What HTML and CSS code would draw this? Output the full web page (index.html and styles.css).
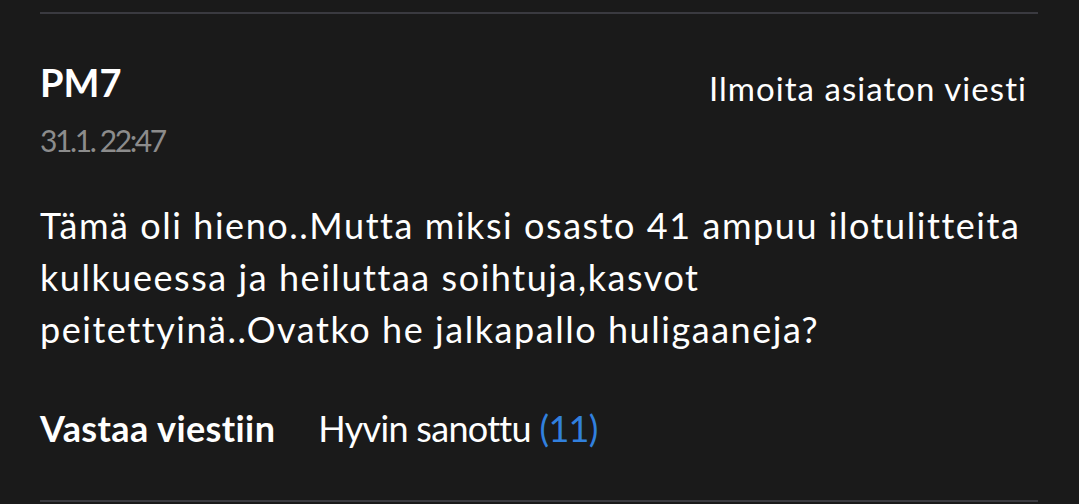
FILE: index.html
```html
<!DOCTYPE html>
<html lang="fi">
  <head>
    <meta charset="UTF-8" />
    <meta name="viewport" content="width=device-width, initial-scale=1.0" />
    <title>Kommentti</title>
    <link rel="stylesheet" href="styles.css">
  </head>
  <body>
    <div class="comment">
      <div class="comment-head">
        <div class="author">
          <h3 class="name">PM7</h3>
          <span class="time">31.1. 22:47</span>
        </div>
        <a class="report" href="#">Ilmoita asiaton viesti</a>
      </div>
      <p class="text">
        Tämä oli hieno..Mutta miksi osasto 41 ampuu ilotulitteita kulkueessa ja heiluttaa soihtuja,kasvot peitettyinä..Ovatko he jalkapallo huligaaneja?
      </p>
      <div class="actions">
        <a class="reply" href="#">Vastaa viestiin</a>
        <a class="like" href="#">Hyvin sanottu <span class="count">(11)</span></a>
      </div>
    </div>
  </body>
</html>
```

FILE: styles.css
```css
* {
  box-sizing: border-box;
}

body {
  margin: 0;
  background: #1a1a1a;
  color: #fff;
  font-family: "Lato", sans-serif;
  height: 100vh;
  overflow: hidden;
}

.comment {
  margin: 12px 41px 0 40px;
  border-top: 2px solid #3a3a40;
  border-bottom: 2px solid #3a3a40;
  padding: 46px 11px 50px 0;
}

.comment-head {
  display: flex;
  justify-content: space-between;
  align-items: flex-start;
}

.name {
  margin: 0;
  font-size: 38px;
  font-weight: 700;
  line-height: 44px;
}

.time {
  display: block;
  margin-top: 18px;
  color: #8c8c8c;
  font-size: 30px;
  line-height: 36px;
  letter-spacing: -2.4px;
}

.report {
  color: #fff;
  text-decoration: none;
  font-size: 33px;
  line-height: 44px;
  letter-spacing: 1.05px;
  margin-top: 6px;
}

.text {
  margin: 41px 0 0;
  font-size: 36px;
  line-height: 52px;
  letter-spacing: 1.55px;
}

.actions {
  display: flex;
  gap: 43px;
  margin-top: 51px;
  font-size: 36px;
  line-height: 44px;
}

.actions a {
  color: #fff;
  text-decoration: none;
}

.reply {
  font-weight: 700;
  letter-spacing: 0.4px;
}

.like {
  letter-spacing: -0.7px;
}

.count {
  color: #3180de;
}
```
